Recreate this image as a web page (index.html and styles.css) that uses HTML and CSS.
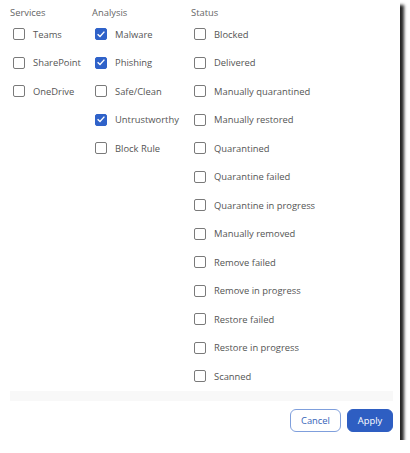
FILE: index.html
```html
<!DOCTYPE html>
<html lang="en">
    <head>
        <meta charset="utf-8">
        <title>Filters</title>
        <link rel="stylesheet" href="styles.css">
    </head>
    <body>
        <div class="panel">
            <div class="columns">
                <div class="col col-services">
                    <div class="col-title">Services</div>
                    <label class="opt"><span class="box"></span>Teams</label>
                    <label class="opt"><span class="box"></span>SharePoint</label>
                    <label class="opt"><span class="box"></span>OneDrive</label>
                </div>
                <div class="col col-analysis">
                    <div class="col-title">Analysis</div>
                    <label class="opt"><span class="box checked"><svg viewBox="0 0 12 12"><path d="M2.6 6.2 L5 8.5 L9.4 3.6"/></svg></span>Malware</label>
                    <label class="opt"><span class="box checked"><svg viewBox="0 0 12 12"><path d="M2.6 6.2 L5 8.5 L9.4 3.6"/></svg></span>Phishing</label>
                    <label class="opt"><span class="box"></span>Safe/Clean</label>
                    <label class="opt"><span class="box checked"><svg viewBox="0 0 12 12"><path d="M2.6 6.2 L5 8.5 L9.4 3.6"/></svg></span>Untrustworthy</label>
                    <label class="opt"><span class="box"></span>Block Rule</label>
                </div>
                <div class="col col-status">
                    <div class="col-title">Status</div>
                    <label class="opt"><span class="box"></span>Blocked</label>
                    <label class="opt"><span class="box"></span>Delivered</label>
                    <label class="opt"><span class="box"></span>Manually quarantined</label>
                    <label class="opt"><span class="box"></span>Manually restored</label>
                    <label class="opt"><span class="box"></span>Quarantined</label>
                    <label class="opt"><span class="box"></span>Quarantine failed</label>
                    <label class="opt"><span class="box"></span>Quarantine in progress</label>
                    <label class="opt"><span class="box"></span>Manually removed</label>
                    <label class="opt"><span class="box"></span>Remove failed</label>
                    <label class="opt"><span class="box"></span>Remove in progress</label>
                    <label class="opt"><span class="box"></span>Restore failed</label>
                    <label class="opt"><span class="box"></span>Restore in progress</label>
                    <label class="opt"><span class="box"></span>Scanned</label>
                </div>
            </div>
            <div class="divider"></div>
            <div class="footer">
                <button class="btn btn-cancel">Cancel</button>
                <button class="btn btn-apply">Apply</button>
            </div>
        </div>
    </body>
</html>
```

FILE: styles.css
```css
body {
    margin: 0;
    background-color: #fff;
    font-family: "Open Sans", "Noto Sans", sans-serif;
    font-size: 9.4px;
    color: #555;
}
.panel {
    width: 400px;
    height: 440px;
    box-sizing: border-box;
    padding: 6px 7px 0 10px;
    background-color: #fff;
    box-shadow: 4px 5px 3px rgba(0, 0, 0, 0.85);
}
.columns {
    display: flex;
}
.col-services {
    width: 82px;
}
.col-analysis {
    width: 99px;
}
.col-status {
    flex: 1;
}
.col-title {
    height: 14px;
    line-height: 14px;
    color: #666;
}
.opt {
    display: flex;
    align-items: center;
    height: 28.5px;
    padding-left: 3px;
}
.box {
    width: 12px;
    height: 12px;
    box-sizing: border-box;
    border: 1.5px solid #7a7a7a;
    border-radius: 2px;
    margin-right: 8px;
    flex-shrink: 0;
}
.box.checked {
    background-color: #2f62c9;
    border-color: #2f62c9;
    position: relative;
}
.box svg {
    position: absolute;
    left: -1.5px;
    top: -1.5px;
    width: 12px;
    height: 12px;
    fill: none;
    stroke: #fff;
    stroke-width: 1.4;
}
.divider {
    height: 10px;
    background-color: #f8f8f8;
}
.footer {
    display: flex;
    justify-content: flex-end;
    gap: 6px;
    padding-top: 8px;
}
.btn {
    height: 23px;
    border-radius: 6px;
    font-family: "Open Sans", "Noto Sans", sans-serif;
    font-size: 9.4px;
    padding: 0;
}
.btn-cancel {
    width: 51px;
    background-color: #fff;
    border: 1px solid #7f9fdc;
    color: #3563b8;
}
.btn-apply {
    width: 46px;
    background-color: #2e5ec2;
    border: 1px solid #2e5ec2;
    color: #fff;
}
```
